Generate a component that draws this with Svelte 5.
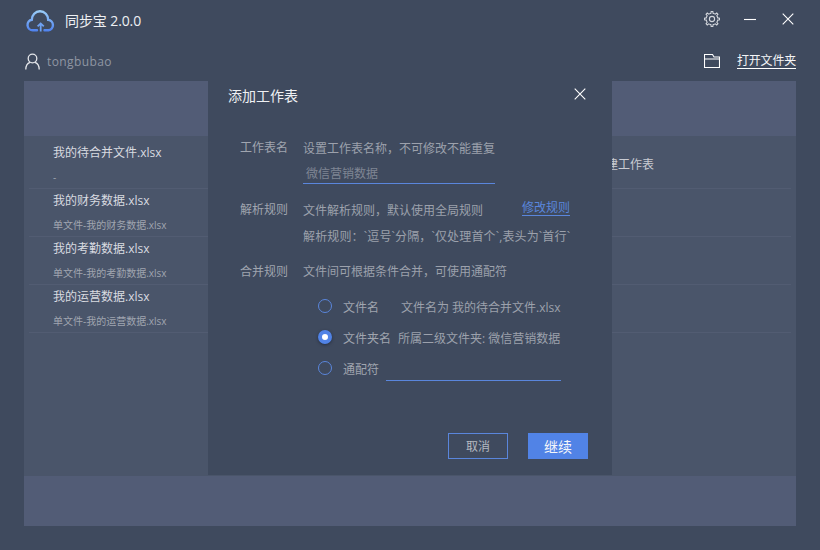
<script>
  const rows = [
    { name: '我的待合并文件.xlsx', sub: '-', action: '新建工作表' },
    { name: '我的财务数据.xlsx', sub: '单文件-我的财务数据.xlsx' },
    { name: '我的考勤数据.xlsx', sub: '单文件-我的考勤数据.xlsx' },
    { name: '我的运营数据.xlsx', sub: '单文件-我的运营数据.xlsx' }
  ];
  const gear = (() => {
    const c = 8, teeth = 8;
    let d = '';
    for (let i = 0; i < teeth; i++) {
      const a = (i / teeth) * Math.PI * 2;
      const step = Math.PI * 2 / teeth;
      const pts = [[5.8, a - step * 0.5], [5.8, a - step * 0.24], [7.6, a - step * 0.14], [7.6, a + step * 0.14], [5.8, a + step * 0.24]];
      for (const [r, t] of pts) {
        d += (d ? 'L' : 'M') + (c + r * Math.cos(t)).toFixed(2) + ' ' + (c + r * Math.sin(t)).toFixed(2);
      }
    }
    return d + 'Z';
  })();
</script>

<div class="app">
  <header class="title">
    <svg class="logo" width="30" height="22" viewBox="0 0 30 22" fill="none">
      <defs>
        <linearGradient id="cloud" gradientUnits="userSpaceOnUse" x1="0" y1="0" x2="0" y2="22">
          <stop offset="0" stop-color="#9ccff8" />
          <stop offset="1" stop-color="#4c7fee" />
        </linearGradient>
      </defs>
      <path d="M11 20.300H6.800a5.300 5.300 0 0 1-1-10.500A8.200 8.600 0 0 1 22.200 9.800a5.300 5.300 0 0 1 .3 10.500H18.500" stroke="url(#cloud)" stroke-width="2.400" stroke-linecap="round" />
      <path d="M14.700 21.500V13.500M11.600 16.400l3.100-3 3.100 3" stroke="#6ea1f2" stroke-width="1.800" />
    </svg>
    <span class="app-name">同步宝 2.0.0</span>
    <div class="controls">
      <svg class="gear" width="16" height="16" viewBox="0 0 16 16" fill="none" stroke="#d3d6dc" stroke-width="1.100">
        <path d={gear} />
        <circle cx="8" cy="8" r="2.600" />
      </svg>
      <svg width="12" height="12" viewBox="0 0 12 12" stroke="#fff" stroke-width="1.100"><path d="M0 6.500H12" /></svg>
      <svg width="12" height="12" viewBox="0 0 12 12" stroke="#fff" stroke-width="1.100"><path d="M.7.700 11.300 11.300M11.300.700.700 11.300" /></svg>
    </div>
  </header>

  <div class="userbar">
    <svg class="person" width="15" height="17" viewBox="0 0 15 17" fill="none" stroke="#e4e6ea" stroke-width="1.300">
      <circle cx="7.500" cy="5.500" r="4.300" />
      <path d="M.8 16.500c0-3.800 2.300-6.400 4.200-7.100M14.200 16.500c0-3.800-2.300-6.400-4.200-7.100" />
    </svg>
    <span class="user">tongbubao</span>
    <svg class="folder" width="16" height="14" viewBox="0 0 16 14" fill="none" stroke="#fff" stroke-width="1.100">
      <path d="M.5 13.500V.5H8.500L10 3H15.500V13.500ZM.5 5H15.500" />
    </svg>
    <span class="open">打开文件夹</span>
  </div>

  <section class="panel">
    <div class="band"></div>
    <div class="list">
      {#each rows as row}
        <div class="row">
          <div class="cell">
            <div class="name">{row.name}</div>
            <div class="sub">{row.sub}</div>
          </div>
          {#if row.action}<div class="action">{row.action}</div>{/if}
        </div>
      {/each}
    </div>
    <div class="band foot"></div>
  </section>

  <div class="modal">
    <div class="modal-head">
      <h2>添加工作表</h2>
      <svg width="12" height="12" viewBox="0 0 12 12" stroke="#fff" stroke-width="1.100"><path d="M.7.700 11.300 11.300M11.300.700.700 11.300" /></svg>
    </div>

    <div class="form">
      <div class="label">工作表名</div>
      <div class="desc">设置工作表名称，不可修改不能重复</div>
      <div class="field">微信营销数据</div>

      <div class="label second">解析规则</div>
      <div class="desc second split">
        <span>文件解析规则，默认使用全局规则</span>
        <span class="link">修改规则</span>
      </div>
      <div class="desc rule">解析规则：`逗号`分隔，`仅处理首个`,表头为`首行`</div>

      <div class="label third">合并规则</div>
      <div class="desc third">文件间可根据条件合并，可使用通配符</div>
    </div>

    <div class="radios">
      <div class="radio-row">
        <span class="radio"></span>
        <span class="r-label w58">文件名</span>
        <span class="r-value">文件名为 我的待合并文件.xlsx</span>
      </div>
      <div class="radio-row">
        <span class="radio on"></span>
        <span class="r-label w55">文件夹名</span>
        <span class="r-value">所属二级文件夹: 微信营销数据</span>
      </div>
      <div class="radio-row">
        <span class="radio"></span>
        <span class="r-label w43">通配符</span>
        <span class="r-input"></span>
      </div>
    </div>

    <div class="buttons">
      <button class="ghost">取消</button>
      <button class="primary">继续</button>
    </div>
  </div>
</div>

<style>
  :global(body) { margin: 0; }
  .app {
    position: relative;
    width: 820px;
    height: 550px;
    overflow: hidden;
    background: #3f4a5e;
    display: flex;
    flex-direction: column;
    font-family: "Open Sans", "Noto Sans CJK SC", sans-serif;
    font-size: 12px;
    color: #a3a8b2;
  }
  .title {
    height: 40px;
    display: flex;
    align-items: center;
    padding-left: 26px;
    box-sizing: border-box;
  }
  .logo { flex: none; margin-top: 1px; }
  .app-name { margin-left: 9px; margin-top: -1px; font-size: 14px; color: #eef0f3; letter-spacing: -0.1px; }
  .controls {
    margin-left: auto;
    display: flex;
    align-items: center;
    gap: 24px;
    padding-right: 26px;
    margin-top: -2px;
  }
  .controls svg:nth-child(3) { margin-left: 2px; }
  .userbar {
    height: 41px;
    display: flex;
    align-items: center;
    padding: 0 24px 0 25px;
    box-sizing: border-box;
  }
  .person { margin-top: 1px; }
  .user { margin-left: 7px; letter-spacing: .4px; color: #8f96a3; margin-top: 1px; }
  .folder { margin-left: auto; }
  .open {
    margin-left: 17px;
    color: #f4f5f7;
    border-bottom: 1px solid #fff;
    line-height: 15px;
    height: 15px;
    font-size: 12px;
    letter-spacing: -0.2px;
  }
  .panel {
    margin: 0 24px;
    height: 445px;
    display: flex;
    flex-direction: column;
    background: #4a556a;
  }
  .band { height: 55px; background: #525c76; flex: none; }
  .band.foot { height: 50px; margin-top: auto; }
  .list { padding: 5px 5px 0; }
  .row {
    height: 48px;
    box-sizing: border-box;
    border-bottom: 1px solid #525c72;
    display: flex;
    padding-left: 24px;
  }
  .cell { width: 541px; flex: none; }
  .name { color: #d9dbe0; line-height: 16px; margin-top: 4px; }
  .sub { color: #a0a5b0; font-size: 10px; line-height: 14px; margin-top: 9px; }
  .action { color: #c9ccd3; line-height: 16px; margin-top: 16px; }
  .modal {
    position: absolute;
    left: 208px;
    top: 81px;
    width: 404px;
    height: 394px;
    background: #3f4a5e;
    box-sizing: border-box;
    display: flex;
    flex-direction: column;
  }
  .modal-head {
    height: 30px;
    padding: 0 26px 0 20px;
    display: flex;
    align-items: center;
    justify-content: space-between;
    flex: none;
  }
  .modal-head h2 {
    margin: -3px 0 0;
    font-size: 14px;
    font-weight: 400;
    color: #eef0f3;
  }
  .modal-head svg { margin-top: -4px; }
  .form {
    margin-top: 30px;
    padding-left: 32px;
    display: grid;
    grid-template-columns: 63px 268px;
    line-height: 16px;
    color: #9ca1ac;
  }
  .label { grid-column: 1; color: #a0a5af; }
  .label:first-child { margin-top: -1px; }
  .desc { grid-column: 2; }
  .field {
    grid-column: 2;
    width: 192px;
    box-sizing: border-box;
    margin-top: 9px;
    padding: 0 0 2px 3px;
    height: 18px;
    border-bottom: 1px solid #5a86dc;
    color: #7f8694;
    line-height: 15px;
  }
  .second { margin-top: 19px; }
  .label.second { margin-top: 18px; }
  .split { display: flex; }
  .link {
    position: absolute;
    left: 314px;
    top: 120px;
    color: #5a86dc;
    border-bottom: 1px solid #5a86dc;
    line-height: 13px;
    height: 14px;
  }
  .rule { margin-top: 10px; grid-column: 2; white-space: nowrap; letter-spacing: .15px; }
  .third { margin-top: 19px; }
  .radios {
    margin-top: 19px;
    padding-left: 110px;
    display: flex;
    flex-direction: column;
    gap: 15px;
  }
  .radio-row { display: flex; align-items: center; height: 16px; }
  .radio {
    width: 14px;
    height: 14px;
    flex: none;
    box-sizing: border-box;
    border: 1.5px solid #5a86dc;
    border-radius: 50%;
    margin-right: 11px;
    margin-top: -3px;
  }
  .radio.on {
    background: #fff;
    border: 4px solid #5183e6;
    box-shadow: 0 1px 3px rgba(20, 28, 45, .6);
  }
  .r-label { flex: none; color: #a0a5af; }
  .w58 { width: 58px; }
  .w55 { width: 55px; }
  .w43 { width: 43px; }
  .r-value { color: #9ca1ac; white-space: nowrap; }
  .r-input { width: 175px; height: 20px; margin-top: 4px; box-sizing: border-box; border-bottom: 1px solid #5a86dc; }
  .buttons {
    margin-top: auto;
    margin-bottom: 16px;
    padding-right: 24px;
    display: flex;
    justify-content: flex-end;
    gap: 20px;
  }
  button {
    width: 60px;
    height: 26px;
    font: inherit;
    padding: 0;
    border-radius: 0;
  }
  .ghost { background: transparent; border: 1px solid #5a86dc; color: #b5b9c1; }
  .primary { background: #5183e6; border: none; color: #f4f6fa; font-size: 14px; }
</style>
